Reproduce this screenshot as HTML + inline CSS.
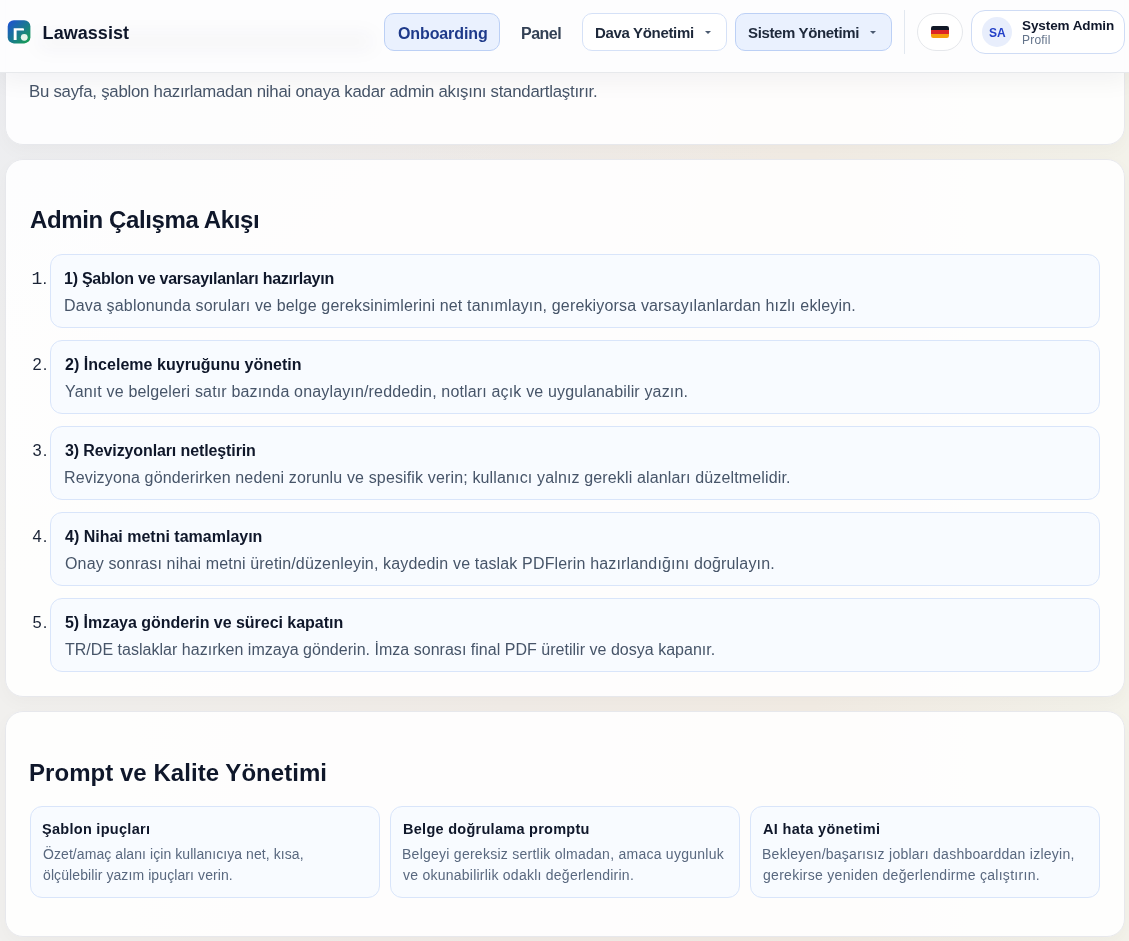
<!DOCTYPE html>
<html lang="tr">
<head>
<meta charset="utf-8">
<title>Lawassist – Onboarding</title>
<style>
*{box-sizing:border-box;margin:0;padding:0}
html,body{width:1129px;height:941px;overflow:hidden}
body{font-family:"Liberation Sans",sans-serif;color:#0f172a;position:relative;
background:radial-gradient(800px 500px at 0 80px,rgba(220,228,250,.2),rgba(220,228,250,0) 100%),linear-gradient(90deg,#f1f0ee 0%,#f1ece7 45%,#f2ece4 72%,#f3f2ea 100%);}
.t{position:absolute;white-space:nowrap}
.card,.hdr{will-change:transform}
.hdr{position:absolute;left:0;top:0;width:1129px;height:73px;background:rgba(253,253,254,.96);border-bottom:1px solid #e7e9ec;z-index:10;box-shadow:0 8px 24px rgba(15,23,42,.05)}
.smudge{position:absolute;left:38px;top:34px;width:335px;height:15px;background:rgba(15,23,42,.04);filter:blur(9px);border-radius:9px}
.logo{position:absolute;left:7px;top:20px;width:25px;height:25px}
.brand{top:21.75px;font-size:18px;font-weight:700;line-height:22px;color:#0f172a}
.pill{position:absolute;top:13px;height:38px;border:1px solid #d5e1f7;border-radius:10px;background:#fff}
.pill.act{background:#eaf1fe;border-color:#bcd0f5}
.nav{top:23.3px;font-size:15px;font-weight:700;line-height:20px;color:#1e293b}
.caret{position:absolute;top:31px;width:0;height:0;border-left:3.2px solid transparent;border-right:3.2px solid transparent;border-top:3.2px solid #4b5a70}
.ava{position:absolute;left:982px;top:17px;width:30px;height:30px;border-radius:50%;background:#e8eefc}
.card{position:absolute;left:5px;width:1120px;background:rgba(255,255,255,.89);border:1px solid #e7e8ec;border-radius:18px;box-shadow:0 6px 18px rgba(15,23,42,.028)}
.lead{font-size:16.8px;line-height:22px;color:#475569}
.h2{font-size:24px;font-weight:700;color:#0f172a;line-height:30px}
.item{position:absolute;left:44px;width:1050px;height:74px;border:1px solid #d9e5fa;border-radius:12px;background:#f8fbff}
.num{left:26.6px;font-size:16.5px;line-height:20px;color:#1b2436;letter-spacing:.9px}
.one{font-family:"Liberation Mono",monospace;font-size:18px;letter-spacing:.2px;margin-left:-1px}
.it{top:12.75px;font-size:16px;font-weight:700;line-height:22px;color:#0f172a}
.id{top:39.7px;font-size:16px;line-height:22px;color:#475569}
.sc{position:absolute;top:94px;width:350px;height:92px;border:1px solid #d9e5fa;border-radius:12px;background:#f8fbff}
.st{top:12px;font-size:14.5px;font-weight:700;line-height:20px;color:#0f172a}
.sd{font-size:14px;line-height:20px;color:#59687f}
</style>
</head>
<body>

<section class="card" style="top:-40px;height:185px">
  <p class="t lead" id="lead" style="left:23.0px;top:120.2px;letter-spacing:-0.244px;">Bu sayfa, şablon hazırlamadan nihai onaya kadar admin akışını standartlaştırır.</p>
</section>

<section class="card" style="top:159px;height:538px">
<h2 class="t h2" style="left:24.0px;top:45.4px;letter-spacing:-0.378px;" id="h2a">Admin Çalışma Akışı</h2>
<div class="t num" id="num1" style="top:108.4px"><span class="one">1</span>.</div>
<div class="item" style="top:94px"><h3 class="t it" id="it1" style="left:13.0px;letter-spacing:-0.243px;">1) Şablon ve varsayılanları hazırlayın</h3><p class="t id" id="id1" style="left:13.0px;letter-spacing:0.165px;">Dava şablonunda soruları ve belge gereksinimlerini net tanımlayın, gerekiyorsa varsayılanlardan hızlı ekleyin.</p></div>
<div class="t num" id="num2" style="top:194.4px">2.</div>
<div class="item" style="top:180px"><h3 class="t it" id="it2" style="left:14.0px;letter-spacing:0.036px;">2) İnceleme kuyruğunu yönetin</h3><p class="t id" id="id2" style="left:14.0px;letter-spacing:0.159px;">Yanıt ve belgeleri satır bazında onaylayın/reddedin, notları açık ve uygulanabilir yazın.</p></div>
<div class="t num" id="num3" style="top:280.4px">3.</div>
<div class="item" style="top:266px"><h3 class="t it" id="it3" style="left:14.0px;letter-spacing:-0.115px;">3) Revizyonları netleştirin</h3><p class="t id" id="id3" style="left:13.0px;letter-spacing:0.146px;">Revizyona gönderirken nedeni zorunlu ve spesifik verin; kullanıcı yalnız gerekli alanları düzeltmelidir.</p></div>
<div class="t num" id="num4" style="top:366.4px">4.</div>
<div class="item" style="top:352px"><h3 class="t it" id="it4" style="left:14.0px;letter-spacing:0.000px;">4) Nihai metni tamamlayın</h3><p class="t id" id="id4" style="left:14.0px;letter-spacing:0.155px;">Onay sonrası nihai metni üretin/düzenleyin, kaydedin ve taslak PDFlerin hazırlandığını doğrulayın.</p></div>
<div class="t num" id="num5" style="top:452.4px">5.</div>
<div class="item" style="top:438px"><h3 class="t it" id="it5" style="left:14.0px;letter-spacing:-0.029px;">5) İmzaya gönderin ve süreci kapatın</h3><p class="t id" id="id5" style="left:14.0px;letter-spacing:0.022px;">TR/DE taslaklar hazırken imzaya gönderin. İmza sonrası final PDF üretilir ve dosya kapanır.</p></div>
</section>

<section class="card" style="top:711px;height:226px">
<h2 class="t h2" style="left:23.0px;top:45.9px;letter-spacing:0.042px;" id="h2b">Prompt ve Kalite Yönetimi</h2>
<div class="sc" style="left:24px"><h3 class="t st" id="st1" style="left:11.0px;letter-spacing:0.286px;">Şablon ipuçları</h3><p class="t sd" id="sd1a" style="left:12.0px;top:37.4px;letter-spacing:0.071px;">Özet/amaç alanı için kullanıcıya net, kısa,</p><p class="t sd" id="sd1b" style="left:12.0px;top:58.15px;letter-spacing:0.094px;">ölçülebilir yazım ipuçları verin.</p></div>
<div class="sc" style="left:384px"><h3 class="t st" id="st2" style="left:12.0px;letter-spacing:0.273px;">Belge doğrulama promptu</h3><p class="t sd" id="sd2a" style="left:11.0px;top:37.4px;letter-spacing:0.255px;">Belgeyi gereksiz sertlik olmadan, amaca uygunluk</p><p class="t sd" id="sd2b" style="left:12.0px;top:58.15px;letter-spacing:0.243px;">ve okunabilirlik odaklı değerlendirin.</p></div>
<div class="sc" style="left:744px"><h3 class="t st" id="st3" style="left:12.0px;letter-spacing:0.333px;">AI hata yönetimi</h3><p class="t sd" id="sd3a" style="left:11.0px;top:37.4px;letter-spacing:0.255px;">Bekleyen/başarısız jobları dashboarddan izleyin,</p><p class="t sd" id="sd3b" style="left:12.0px;top:58.15px;letter-spacing:0.286px;">gerekirse yeniden değerlendirme çalıştırın.</p></div>
</section>

<header class="hdr">
  <div class="smudge"></div>
  <svg class="logo" viewBox="-0.7 -0.3 25 25"><defs><linearGradient id="lg" x1="0" y1="0" x2="1" y2="1"><stop offset="0" stop-color="#1d4ed8"/><stop offset="1" stop-color="#16a34a"/></linearGradient></defs><rect width="22.7" height="23.1" rx="6.2" fill="url(#lg)"/><path d="M6 19.8V7.9h9.3a1 1 0 0 1 1 1v1.3H8.9v9.6z" fill="#fff"/><circle cx="16.55" cy="17.05" r="3.4" fill="#e4f4ea"/></svg>
  <div class="t brand" id="brand" style="left:42.6px;letter-spacing:0.050px;">Lawassist</div>
  <div class="pill act" style="left:384px;width:116px"></div>
  <a class="t nav" id="nav1" style="top:23.7px;left:398.0px;color:#1e3a8a;font-size:16px;letter-spacing:-0.111px;">Onboarding</a>
  <a class="t nav" id="nav2" style="top:23.7px;left:521.0px;color:#334155;font-size:16px;letter-spacing:-0.500px;">Panel</a>
  <div class="pill" style="left:582px;width:145px"></div>
  <a class="t nav" id="nav3" style="left:595.0px;letter-spacing:-0.333px;">Dava Yönetimi</a><i class="caret" style="left:705px"></i>
  <div class="pill act" style="left:735px;width:157px"></div>
  <a class="t nav" id="nav4" style="left:748.0px;letter-spacing:-0.357px;">Sistem Yönetimi</a><i class="caret" style="left:870px"></i>
  <div style="position:absolute;left:904px;top:10px;width:1px;height:44px;background:#e2e8f0"></div>
  <div class="pill" style="left:917px;width:46px;border-radius:19px;border-color:#e5e7eb"></div>
  <svg style="position:absolute;left:931px;top:26px" width="18" height="12" viewBox="0 0 18 12"><defs><clipPath id="fc"><rect width="18" height="12" rx="2.2"/></clipPath></defs><g clip-path="url(#fc)"><rect width="18" height="4" fill="#111827"/><rect y="4" width="18" height="4" fill="#dc2626"/><rect y="8" width="18" height="4" fill="#f59e0b"/></g></svg>
  <div class="pill" style="left:971px;top:10px;width:154px;height:44px;border-radius:14px;border-color:#cfdcf5"></div>
  <div class="ava"></div>
  <div class="t" id="sa" style="left:989.0px;top:23.8px;font-size:12px;font-weight:700;line-height:18px;color:#2340c8;letter-spacing:0.000px;">SA</div>
  <div class="t" id="uname" style="left:1022.0px;top:17.8px;font-size:13.5px;font-weight:700;line-height:16px;color:#0f172a;letter-spacing:-0.091px;">System Admin</div>
  <div class="t" id="profil" style="left:1022.0px;top:32.8px;font-size:12px;line-height:14px;color:#64748b;letter-spacing:0.200px;">Profil</div>
</header>
</body>
</html>
